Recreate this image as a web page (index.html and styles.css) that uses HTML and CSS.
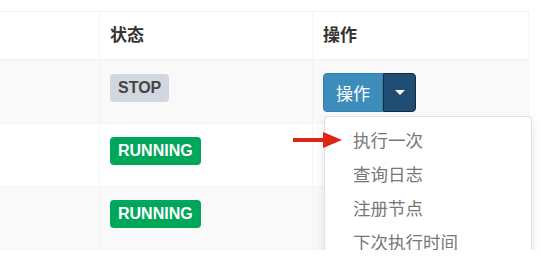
FILE: index.html
```html
<!DOCTYPE html>
<html lang="zh">

<head>
    <meta charset="UTF-8">
    <meta name="viewport" content="width=device-width, initial-scale=1.0">
    <title>任务列表</title>
    <link rel="stylesheet" href="styles.css">
</head>

<body>
    <div class="box">
        <table class="job-table">
            <thead>
                <tr>
                    <th class="col-name"></th>
                    <th class="col-status">状态</th>
                    <th class="col-op">操作</th>
                </tr>
            </thead>
            <tbody>
                <tr>
                    <td class="col-name"></td>
                    <td><span class="label label-stop">STOP</span></td>
                    <td>
                        <div class="btn-group open">
                            <button class="btn btn-main">操作</button><button class="btn btn-toggle"><span class="caret"></span></button>
                            <ul class="dropdown-menu">
                                <li class="menu-item">执行一次</li>
                                <li class="menu-item">查询日志</li>
                                <li class="menu-item">注册节点</li>
                                <li class="menu-item">下次执行时间</li>
                            </ul>
                            <svg class="pointer" width="50" height="18" viewBox="0 0 50 18">
                                <rect x="0" y="7" width="32" height="4" fill="#df2514"/>
                                <polygon points="30,1 49,9 30,17" fill="#df2514"/>
                            </svg>
                        </div>
                    </td>
                </tr>
                <tr>
                    <td class="col-name"></td>
                    <td><span class="label label-running">RUNNING</span></td>
                    <td></td>
                </tr>
                <tr>
                    <td class="col-name"></td>
                    <td><span class="label label-running">RUNNING</span></td>
                    <td></td>
                </tr>
            </tbody>
        </table>
    </div>
</body>

</html>
```

FILE: styles.css
```css
html,
body {
    overflow: hidden;
}

body {
    margin: 0;
    padding: 0;
    background: #fff;
    font-family: "Liberation Sans", "Noto Sans CJK SC", sans-serif;
    font-size: 17px;
    color: #333;
}

.box {
    padding-top: 11px;
}

.job-table {
    border-collapse: collapse;
    table-layout: fixed;
    width: 529px;
}

.job-table th,
.job-table td {
    border: 1px solid #f4f4f4;
    text-align: left;
    vertical-align: top;
}

.job-table th {
    padding: 11px 10px;
    line-height: 25px;
    font-weight: bold;
    border-bottom: 2px solid #f4f4f4;
}

.job-table td {
    padding: 12px 10px 11px;
    line-height: 25px;
    height: 39px;
}

.job-table .col-name {
    width: 79px;
    border-left: none;
}

.job-table .col-status {
    width: 192px;
}

.job-table tbody tr:nth-child(odd) {
    background: #f9f9f9;
}

.label {
    display: inline-block;
    vertical-align: top;
    margin-top: 1px;
    height: 28px;
    line-height: 28px;
    padding: 0 8px;
    border-radius: 4px;
    font-size: 16px;
    font-weight: bold;
}

.label-stop {
    background: #d2d6de;
    color: #444;
}

.label-running {
    background: #00a65a;
    color: #fff;
}

.btn-group {
    position: relative;
    display: inline-flex;
}

.btn {
    height: 39px;
    margin: 0;
    font-family: inherit;
    font-size: 17px;
    color: #fff;
    cursor: pointer;
}

.btn-main {
    width: 60px;
    background: #3c8dbc;
    border: 1px solid #367fa9;
    border-radius: 4px 0 0 4px;
}

.btn-toggle {
    width: 33px;
    background: #204d74;
    border: 1px solid #122b40;
    border-radius: 0 4px 4px 0;
    display: flex;
    align-items: center;
    justify-content: center;
}

.caret {
    width: 0;
    height: 0;
    border-top: 5px solid #fff;
    border-left: 5px solid transparent;
    border-right: 5px solid transparent;
}

.dropdown-menu {
    position: absolute;
    top: 100%;
    left: 1px;
    z-index: 10;
    width: 206px;
    margin: 4px 0 0;
    padding: 7px 0;
    list-style: none;
    background: #fff;
    border: 1px solid rgba(0, 0, 0, 0.12);
    border-radius: 4px;
    box-shadow: 0 6px 12px rgba(0, 0, 0, 0.1);
}

.menu-item {
    padding: 0 28px;
    height: 34px;
    line-height: 34px;
    font-size: 17.5px;
    color: #777;
    white-space: nowrap;
}

.pointer {
    position: absolute;
    left: -30px;
    top: 58px;
    z-index: 20;
}
```
